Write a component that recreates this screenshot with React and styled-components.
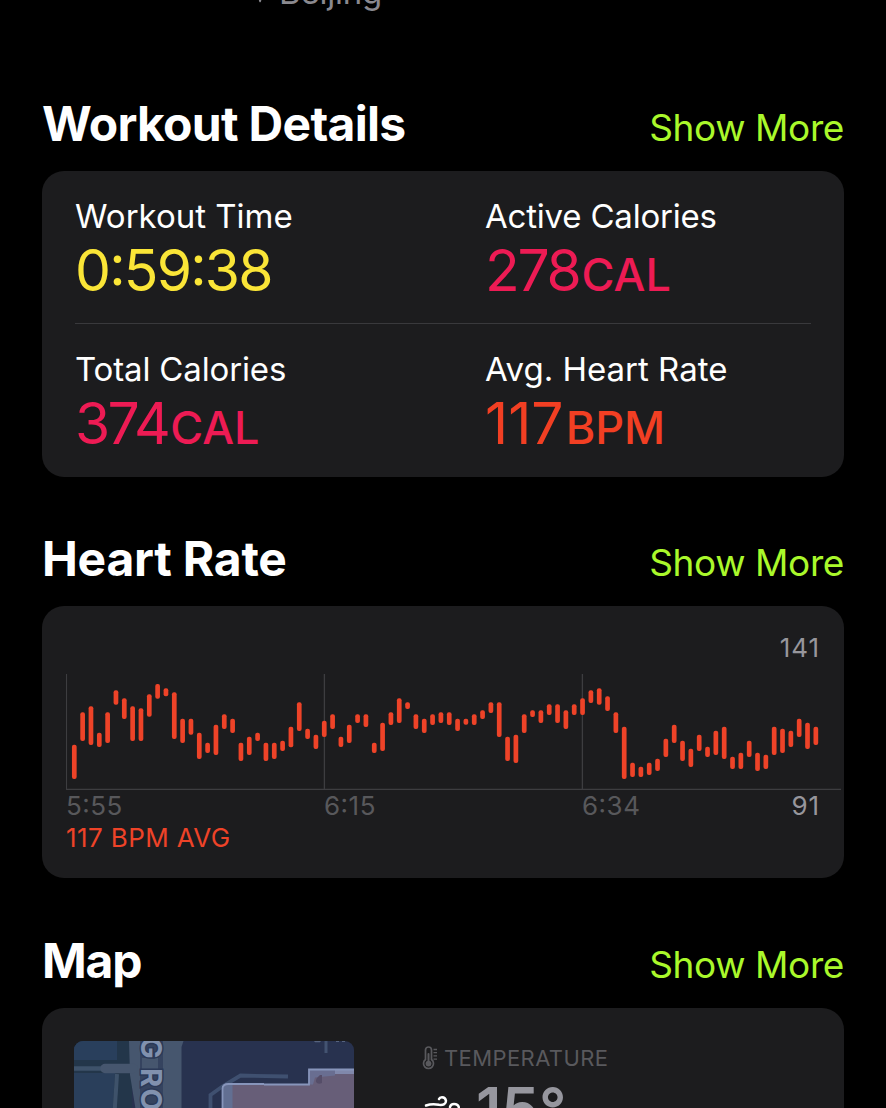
import React from "react";
import styled, { createGlobalStyle } from "styled-components";

const GlobalStyle = createGlobalStyle`
  * { box-sizing: border-box; }
  html, body { margin: 0; background: #000; }
  body { font-family: Inter, "Noto Sans", sans-serif; font-kerning: normal; }
  svg { display: block; flex: none; }
`;

const Screen = styled.main`
  width: 886px;
  height: 1108px;
  overflow: hidden;
  padding: 0 42px;
  background: #000;
  color: #fff;
`;

const Location = styled.div`
  display: flex;
  height: 93px;
  padding-left: 208px;
  gap: 7px;
  color: #8a898f;
`;

const City = styled.span`
  margin-top: -28px;
  font-size: 33px;
  line-height: 41px;
  letter-spacing: -0.2px;
`;

const Section = styled.section`
  margin-top: ${(p) => p.$gap || 0}px;
`;

const SectionHeader = styled.header`
  display: flex;
  justify-content: space-between;
  align-items: baseline;
  height: 61px;
  padding-top: 1px;
  margin-bottom: 17px;
`;

const Title = styled.h2`
  margin: 0;
  font-size: 48px;
  line-height: 60px;
  font-weight: 700;
  letter-spacing: ${(p) => p.$spacing}px;
  white-space: nowrap;
`;

const ShowMore = styled.a`
  font-size: 37px;
  line-height: 46px;
  color: #aaf82b;
  letter-spacing: -0.4px;
  white-space: nowrap;
`;

const Card = styled.div`
  width: 802px;
  height: ${(p) => p.$height}px;
  border-radius: 22px;
  background: #1c1c1e;
`;

const MetricsCard = styled(Card)`
  padding: 0 33px;
`;

const MetricRow = styled.div`
  display: grid;
  grid-template-columns: 410px 1fr;
  height: 153px;
  padding-top: 25px;
  border-bottom: ${(p) => (p.$divided ? "1px solid #39393c" : "0")};
`;

const Metric = styled.div`
  display: flex;
  flex-direction: column;
  gap: 5px;
  white-space: nowrap;
`;

const MetricLabel = styled.span`
  font-size: 33px;
  line-height: 40px;
  letter-spacing: ${(p) => p.$spacing || 0}px;
`;

const MetricValue = styled.span`
  font-size: 57px;
  line-height: 60px;
  font-feature-settings: "case";
  letter-spacing: ${(p) => p.$spacing || 0}px;
  color: ${(p) => p.$color};
`;

const Unit = styled.span`
  margin-left: 2px;
  font-size: 45px;
  font-weight: 500;
  letter-spacing: 0;
`;

const ChartCard = styled(Card)`
  padding: 25px 3px 0 24px;
`;

const ChartMax = styled.div`
  height: 43px;
  padding-right: 21px;
  text-align: right;
  font-size: 26px;
  line-height: 33px;
  letter-spacing: 0.9px;
  color: #97969c;
`;

const TimeAxis = styled.div`
  display: grid;
  grid-template-columns: 258px 258px 1fr auto;
  padding-right: 21px;
  font-size: 26px;
  line-height: 32px;
  letter-spacing: 0.5px;
  font-feature-settings: "case";
  color: #58585b;
`;

const ChartMin = styled.span`
  color: #97969c;
  letter-spacing: 0.9px;
`;

const Average = styled.div`
  font-size: 26px;
  line-height: 32px;
  letter-spacing: 0.4px;
  color: #ee4328;
`;

const MapCard = styled(Card)`
  display: flex;
  gap: 68px;
  padding: 33px 32px 0;
`;

const Weather = styled.div`
  padding-top: 3px;
`;

const WeatherLabel = styled.div`
  display: flex;
  align-items: center;
  gap: 6px;
  font-size: 22px;
  line-height: 28px;
  letter-spacing: 0.4px;
  color: #59595d;
`;

const WeatherValue = styled.div`
  display: flex;
  gap: 16px;
  padding-top: 2px;
  font-size: 60px;
  line-height: 70px;
  font-weight: 600;
  color: #96969e;

  svg {
    margin-top: 20px;
  }
`;

/* Each pair is the top and bottom of a bar, in thirds of a pixel. */
const BARS = [
  [254, 357], [157, 243], [139, 255], [218, 261], [157, 249], [91, 134],
  [115, 177], [139, 243], [145, 243], [103, 170], [72, 116], [85, 109],
  [97, 237], [176, 249], [176, 224], [218, 297], [248, 279], [194, 285],
  [163, 207], [176, 219], [248, 303], [230, 285], [218, 243], [248, 303],
  [248, 297], [242, 273], [200, 262], [127, 213], [206, 237], [224, 267],
  [182, 231], [163, 207], [230, 261], [194, 249], [163, 189], [163, 201],
  [248, 279], [188, 273], [157, 195], [115, 189], [127, 147], [163, 207],
  [176, 219], [163, 195], [157, 189], [157, 195], [176, 213], [176, 194],
  [163, 195], [151, 177], [127, 159], [127, 231], [230, 303], [224, 309],
  [163, 219], [151, 171], [151, 189], [133, 165], [133, 189], [151, 207],
  [133, 165], [115, 165], [91, 129], [85, 134], [109, 153], [157, 219],
  [200, 357], [308, 351], [320, 351], [308, 345], [296, 333], [236, 291],
  [194, 249], [242, 303], [266, 321], [224, 273], [260, 291], [212, 285],
  [200, 297], [290, 327], [278, 327], [242, 291], [278, 333], [284, 327],
  [200, 285], [206, 279], [212, 261], [176, 231], [188, 267], [200, 255],
];

function HeartRateChart() {
  return (
    <svg width="775" height="116" viewBox="0 0 775 116">
      <g stroke="#3d3d40" strokeWidth="1.3">
        <line x1="0.4" y1="0" x2="0.4" y2="116" />
        <line x1="258.4" y1="0" x2="258.4" y2="116" />
        <line x1="516.4" y1="0" x2="516.4" y2="116" />
        <line x1="0" y1="115.4" x2="775" y2="115.4" />
      </g>
      <g fill="#ee4328">
        {BARS.map(([top, bottom], i) => (
          <rect
            key={i}
            x={8.3 + i * 8.332 - 2.35}
            y={top / 3 - 14}
            width="4.7"
            height={(bottom - top) / 3}
            rx="2"
          />
        ))}
      </g>
    </svg>
  );
}

function LocationArrow() {
  return (
    <svg width="22" height="6" viewBox="0 0 22 6">
      <path d="M8.8 0h2.6l-.6 1.7q-.7 1-1.5 0z" fill="currentColor" />
    </svg>
  );
}

function MapPreview() {
  return (
    <svg width="280" height="80" viewBox="0 0 280 80">
      <defs>
        <clipPath id="frame">
          <rect width="280" height="100" rx="9" />
        </clipPath>
      </defs>
      <g clipPath="url(#frame)">
        <rect width="280" height="80" fill="#28324f" />
        <rect width="58" height="80" fill="#23364a" />
        <path d="M0 0h43v19H0z" fill="#293f5c" />
        <path d="M0 32h41l-3 48H0z" fill="#2a3f5b" />
        <path d="M0 27.5h30" stroke="#3e526a" strokeWidth="4.5" />
        <path d="M43 33l-3 47" stroke="#3e526a" strokeWidth="4" />
        <path d="M55 0h54.500l-2 6v74H63.500l-7.500-46z" fill="#46566e" />
        <path d="M31 27.500h28" stroke="#46566e" strokeWidth="9.500" strokeLinecap="round" />
        <path d="M66 0h23v80H66z" fill="#35435f" />
        <path d="M68 17h16v12H68z" fill="#46566e" />
        <g
          transform="translate(66.5 0) rotate(90)"
          fill="#8191ae"
          stroke="#2b3957"
          strokeWidth="3"
          paintOrder="stroke"
          fontSize="29"
          fontWeight="700"
        >
          <text x="-4" y="0">G</text>
          <text x="27" y="0">R</text>
          <text x="47.5" y="0">O</text>
        </g>
        <path
          d="M136.500 80V54L149 45l17.500-10.500L214 35.500"
          fill="none"
          stroke="#3f5070"
          strokeWidth="3.800"
        />
        <path d="M252 0v12" stroke="#435371" strokeWidth="3" />
        <path d="M240 0h7l-1 1.200h-5zM262 0h3v1h-3zM268 0h3v1h-3z" fill="#56637f" />
        <path d="M148.500 80V48q0-5 6-5H235V28.500h46V80z" fill="#675e78" />
        <path d="M148.500 80V48q0-5 10-5V80z" fill="#626f92" />
        <path d="M235 28.500h26v6l-20 2-2 7h-4z" fill="#696e91" />
        <path d="M261 28.500h20v4.500h-20z" fill="#8088ab" />
        <path d="M246 34q-5 4-4 7 2 3 6 1v-8z" fill="#554d68" />
        <path
          d="M148.500 80V48q0-5 6-5H190M190 43.500H235V28.500h46"
          fill="none"
          stroke="#8795bb"
          strokeWidth="1.800"
        />
      </g>
    </svg>
  );
}

function ThermometerIcon() {
  return (
    <svg width="16" height="28" viewBox="0 0 16 28" fill="none" stroke="currentColor">
      <path
        d="M3.500 15.500V6a3 3 0 0 1 6 0v9.500a5 5 0 1 1-6 0z"
        strokeWidth="1.700"
      />
      <path d="M6.500 10v8" strokeWidth="2" strokeLinecap="round" />
      <circle cx="6.500" cy="19.600" r="2.900" fill="currentColor" stroke="none" />
      <path d="M11.500 5.500h3.500M11.500 8.700h3.500M11.500 11.900h3.500M11.500 15.100h3.500" strokeWidth="1.300" />
    </svg>
  );
}

function WindIcon() {
  return (
    <svg
      width="38"
      height="36"
      viewBox="0 0 38 36"
      fill="none"
      stroke="#fff"
      strokeWidth="2.500"
      strokeLinecap="round"
    >
      <path d="M4 11.500Q10 9.300 17 10.800q7 .7 7-4Q23.500 3.200 20 3.200q-2.300 0-3 1.800" />
      <path d="M3 18q12-3 23 0 11 1 11-4-.5-4-5-4-3.300 0-4 3" />
    </svg>
  );
}

function Stat({ label, labelSpacing, value, unit, color, spacing }) {
  return (
    <Metric>
      <MetricLabel $spacing={labelSpacing}>{label}</MetricLabel>
      <MetricValue $color={color} $spacing={spacing}>
        {value}
        {unit && <Unit>{unit}</Unit>}
      </MetricValue>
    </Metric>
  );
}

function Header({ title, spacing }) {
  return (
    <SectionHeader>
      <Title $spacing={spacing}>{title}</Title>
      <ShowMore>Show More</ShowMore>
    </SectionHeader>
  );
}

export default function App() {
  return (
    <Screen>
      <GlobalStyle />
      <Location>
        <LocationArrow />
        <City>Beijing</City>
      </Location>

      <Section>
        <Header title="Workout Details" spacing={-0.7} />
        <MetricsCard $height={306}>
          <MetricRow $divided>
            <Stat label="Workout Time" value="0:59:38" color="#fae537" spacing={-1.8} />
            <Stat
              label="Active Calories"
              labelSpacing={-0.2}
              value="278"
              unit="CAL"
              color="#ed1b54"
              spacing={-2.3}
            />
          </MetricRow>
          <MetricRow>
            <Stat
              label="Total Calories"
              labelSpacing={-0.15}
              value="374"
              unit="CAL"
              color="#ed1b54"
              spacing={-2.6}
            />
            <Stat label="Avg. Heart Rate" value="117" unit="BPM" color="#f23f23" spacing={0} />
          </MetricRow>
        </MetricsCard>
      </Section>

      <Section $gap={51}>
        <Header title="Heart Rate" spacing={-0.25} />
        <ChartCard $height={272}>
          <ChartMax>141</ChartMax>
          <HeartRateChart />
          <TimeAxis>
            <span>5:55</span>
            <span>6:15</span>
            <span>6:34</span>
            <ChartMin>91</ChartMin>
          </TimeAxis>
          <Average>117 BPM AVG</Average>
        </ChartCard>
      </Section>

      <Section $gap={52}>
        <Header title="Map" spacing={-1.2} />
        <MapCard $height={300}>
          <MapPreview />
          <Weather>
            <WeatherLabel>
              <ThermometerIcon />
              TEMPERATURE
            </WeatherLabel>
            <WeatherValue>
              <WindIcon />
              <span>15°</span>
            </WeatherValue>
          </Weather>
        </MapCard>
      </Section>
    </Screen>
  );
}
